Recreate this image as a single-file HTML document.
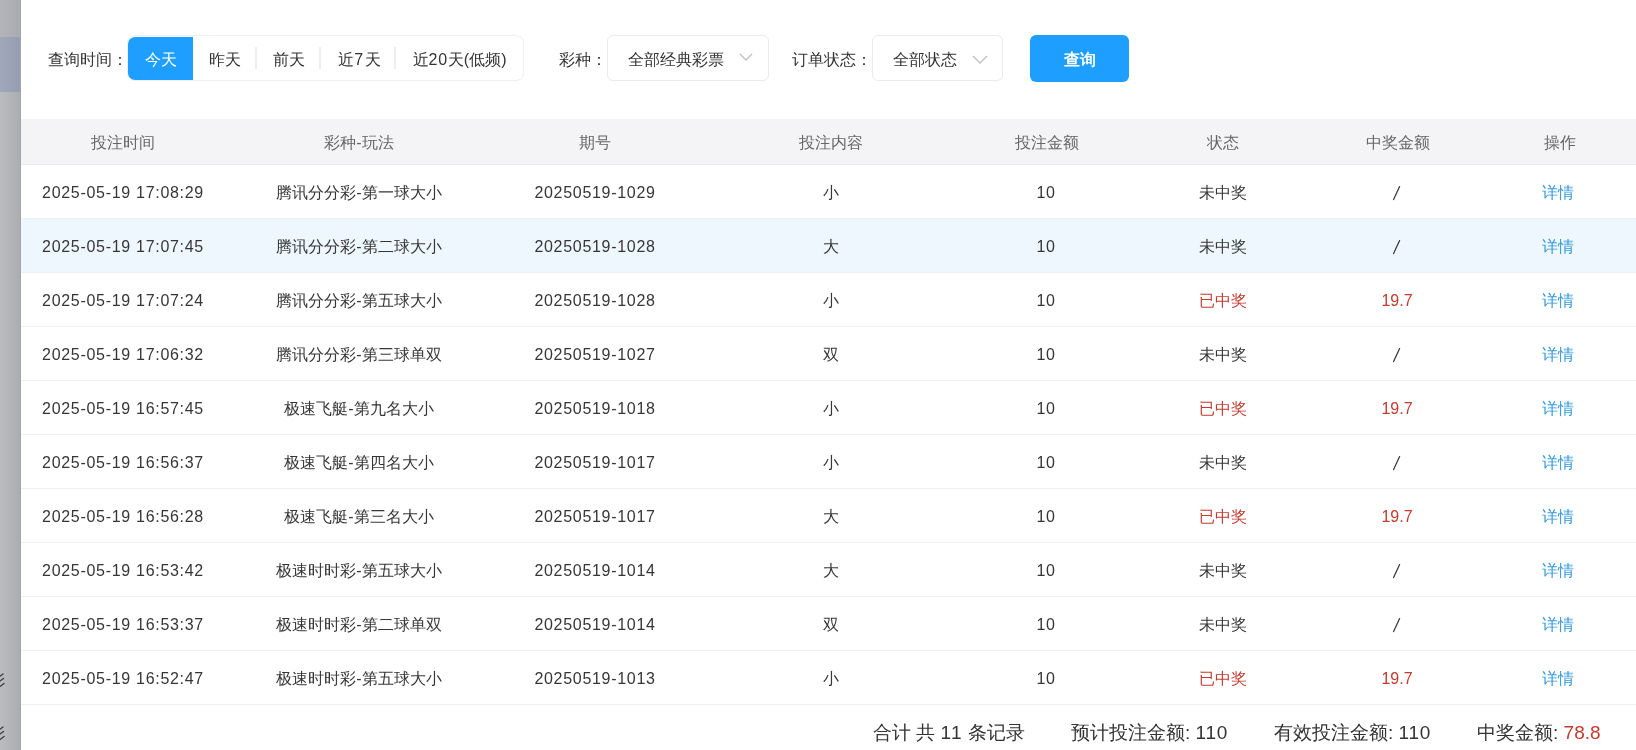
<!DOCTYPE html>
<html><head><meta charset="utf-8">
<style>
*{margin:0;padding:0;box-sizing:border-box}
html,body{width:1636px;height:750px;overflow:hidden;background:#fff}
body{font-family:"Liberation Sans",sans-serif;color:#333;position:relative}
.wrap{position:absolute;left:0;top:0;width:1636px;height:750px;will-change:transform}
.side{position:absolute;left:0;top:0;width:21px;height:750px;background:linear-gradient(90deg,#bbbcbf,#acadb1);border-right:1px solid #a4a5a9}
.side .band{position:absolute;left:0;top:37px;width:20px;height:55px;background:linear-gradient(90deg,#a0a8ba,#959db0)}
.side .topb{position:absolute;left:0;top:0;width:20px;height:37px;background:linear-gradient(90deg,#b4b5bb,#a9abb1)}
.main{position:absolute;left:21px;top:0;width:1615px;height:750px;background:#fff}
.lbl{position:absolute;top:49px;font-size:16px;line-height:22px;color:#333;white-space:nowrap}
.grp{position:absolute;left:127px;top:35px;width:397px;height:46px;border:1px solid #efeff1;border-radius:8px}
.tab{position:absolute;top:37px;height:43px;line-height:45px;font-size:16px;color:#333;text-align:center}
.tab.on{background:#1e9fff;color:#fff;border-radius:7px 0 0 7px}
.sep{position:absolute;top:47px;width:2px;height:22px;background:#eeeef0}
.sel{position:absolute;top:35px;height:46px;border:1px solid #ebebee;border-radius:6px}
.sel svg{position:absolute}
.sel span{position:absolute;font-size:16px;line-height:22px;top:13px;color:#333;white-space:nowrap}
.btn{position:absolute;left:1030px;top:35px;width:99px;height:47px;background:#1e9fff;border-radius:6px;color:#fff;font-size:16px;line-height:49px;text-align:center}
table{position:absolute;left:21px;top:119px;width:1619px;border-collapse:collapse;table-layout:fixed}
th{height:45px;background:#f4f4f6;color:#666;font-weight:normal;font-size:16px;border-bottom:1px solid #ebebef;padding-top:4px}
td{height:54px;font-size:16px;color:#363636;text-align:center;border-bottom:1px solid #efeff2;padding-top:3px}
td.n{letter-spacing:0.7px;padding-top:3px}
td.c{padding-top:5px}
td.lnk{padding-right:3px}
td.r2{padding-right:2px}
td.l1{padding-left:1px}
td.sl{padding-top:4px;padding-right:3px}
td.sl svg{display:block;margin:0 auto}
tr.hl td{background:#eff7fe}
.red{color:#c23b2f}
.lnk{color:#3399d8}
.foot{position:absolute;top:720px;font-size:19px;line-height:26px;color:#333;white-space:nowrap}
</style></head><body>
<div class="wrap">
<div class="side"><div class="topb"></div><div class="band"></div><svg width="21" height="750" style="position:absolute;left:0;top:0"><g stroke="#3b3b3e" stroke-width="1.3" fill="none" stroke-linecap="round"><path d="M-1 677 L3 674"/><path d="M-1 681.8 L3.5 678.5"/><path d="M-1 687.2 L4 683.5"/><path d="M-1 730 L3 727"/><path d="M-1 734.8 L3.5 731.5"/><path d="M-1 740.2 L4 736.5"/></g></svg></div>
<div class="main"></div>
<div class="lbl" style="left:48px">查询时间：</div>
<div class="grp"></div>
<div class="tab on" style="left:128px;width:65px">今天</div>
<div class="tab" style="left:193px;width:64px">昨天</div>
<div class="sep" style="left:255px"></div>
<div class="tab" style="left:257px;width:64px">前天</div>
<div class="sep" style="left:319px"></div>
<div class="tab" style="left:321px;width:75px;padding-left:2px">近<span style="letter-spacing:1.5px">7</span>天</div>
<div class="sep" style="left:394px"></div>
<div class="tab" style="left:396px;width:127px">近<span style="letter-spacing:0.75px">20</span>天(低频)</div>

<div class="lbl" style="left:559px">彩种：</div>
<div class="sel" style="left:607px;width:162px"><span style="left:20px">全部经典彩票</span><svg width="16" height="10" style="left:130px;top:15.5px"><path d="M2 2 L8 8 L14 2" stroke="#bcc0c8" stroke-width="1.4" fill="none"/></svg></div>
<div class="lbl" style="left:792px">订单状态：</div>
<div class="sel" style="left:872px;width:131px"><span style="left:20px">全部状态</span><svg width="18" height="11" style="left:98px;top:18px"><path d="M2 2 L9 9 L16 2" stroke="#bcc0c8" stroke-width="1.4" fill="none"/></svg></div>
<div class="btn" style="font-weight:bold">查询</div>

<table>
<colgroup><col style="width:203px"><col style="width:270px"><col style="width:202px"><col style="width:270px"><col style="width:162px"><col style="width:189px"><col style="width:162px"><col style="width:161px"></colgroup>
<thead><tr><th>投注时间</th><th>彩种-玩法</th><th>期号</th><th>投注内容</th><th>投注金额</th><th>状态</th><th>中奖金额</th><th>操作</th></tr></thead>
<tbody>
<tr><td class="n l1">2025-05-19 17:08:29</td><td class="c">腾讯分分彩-第一球大小</td><td class="n">20250519-1029</td><td class="c">小</td><td class="n r2">10</td><td class="c">未中奖</td><td class="sl"><svg width="9" height="16"><path d="M1.6 14.6 L7.6 1.6" stroke="#383838" stroke-width="1.25" stroke-linecap="round" fill="none"/></svg></td><td class="lnk c">详情</td></tr>
<tr class="hl"><td class="n l1">2025-05-19 17:07:45</td><td class="c">腾讯分分彩-第二球大小</td><td class="n">20250519-1028</td><td class="c">大</td><td class="n r2">10</td><td class="c">未中奖</td><td class="sl"><svg width="9" height="16"><path d="M1.6 14.6 L7.6 1.6" stroke="#383838" stroke-width="1.25" stroke-linecap="round" fill="none"/></svg></td><td class="lnk c">详情</td></tr>
<tr><td class="n l1">2025-05-19 17:07:24</td><td class="c">腾讯分分彩-第五球大小</td><td class="n">20250519-1028</td><td class="c">小</td><td class="n r2">10</td><td class="red c">已中奖</td><td class="red r2">19.7</td><td class="lnk c">详情</td></tr>
<tr><td class="n l1">2025-05-19 17:06:32</td><td class="c">腾讯分分彩-第三球单双</td><td class="n">20250519-1027</td><td class="c">双</td><td class="n r2">10</td><td class="c">未中奖</td><td class="sl"><svg width="9" height="16"><path d="M1.6 14.6 L7.6 1.6" stroke="#383838" stroke-width="1.25" stroke-linecap="round" fill="none"/></svg></td><td class="lnk c">详情</td></tr>
<tr><td class="n l1">2025-05-19 16:57:45</td><td class="c">极速飞艇-第九名大小</td><td class="n">20250519-1018</td><td class="c">小</td><td class="n r2">10</td><td class="red c">已中奖</td><td class="red r2">19.7</td><td class="lnk c">详情</td></tr>
<tr><td class="n l1">2025-05-19 16:56:37</td><td class="c">极速飞艇-第四名大小</td><td class="n">20250519-1017</td><td class="c">小</td><td class="n r2">10</td><td class="c">未中奖</td><td class="sl"><svg width="9" height="16"><path d="M1.6 14.6 L7.6 1.6" stroke="#383838" stroke-width="1.25" stroke-linecap="round" fill="none"/></svg></td><td class="lnk c">详情</td></tr>
<tr><td class="n l1">2025-05-19 16:56:28</td><td class="c">极速飞艇-第三名大小</td><td class="n">20250519-1017</td><td class="c">大</td><td class="n r2">10</td><td class="red c">已中奖</td><td class="red r2">19.7</td><td class="lnk c">详情</td></tr>
<tr><td class="n l1">2025-05-19 16:53:42</td><td class="c">极速时时彩-第五球大小</td><td class="n">20250519-1014</td><td class="c">大</td><td class="n r2">10</td><td class="c">未中奖</td><td class="sl"><svg width="9" height="16"><path d="M1.6 14.6 L7.6 1.6" stroke="#383838" stroke-width="1.25" stroke-linecap="round" fill="none"/></svg></td><td class="lnk c">详情</td></tr>
<tr><td class="n l1">2025-05-19 16:53:37</td><td class="c">极速时时彩-第二球单双</td><td class="n">20250519-1014</td><td class="c">双</td><td class="n r2">10</td><td class="c">未中奖</td><td class="sl"><svg width="9" height="16"><path d="M1.6 14.6 L7.6 1.6" stroke="#383838" stroke-width="1.25" stroke-linecap="round" fill="none"/></svg></td><td class="lnk c">详情</td></tr>
<tr><td class="n l1">2025-05-19 16:52:47</td><td class="c">极速时时彩-第五球大小</td><td class="n">20250519-1013</td><td class="c">小</td><td class="n r2">10</td><td class="red c">已中奖</td><td class="red r2">19.7</td><td class="lnk c">详情</td></tr>
</tbody></table>

<div class="foot" style="left:873px">合计 共 <span style="letter-spacing:1.2px">11</span> 条记录</div>
<div class="foot" style="left:1071px">预计投注金额: <span style="letter-spacing:0.7px">110</span></div>
<div class="foot" style="left:1274px">有效投注金额: <span style="letter-spacing:0.7px">110</span></div>
<div class="foot" style="left:1477px">中奖金额: <span class="red">78.8</span></div>
</div>
</body></html>
